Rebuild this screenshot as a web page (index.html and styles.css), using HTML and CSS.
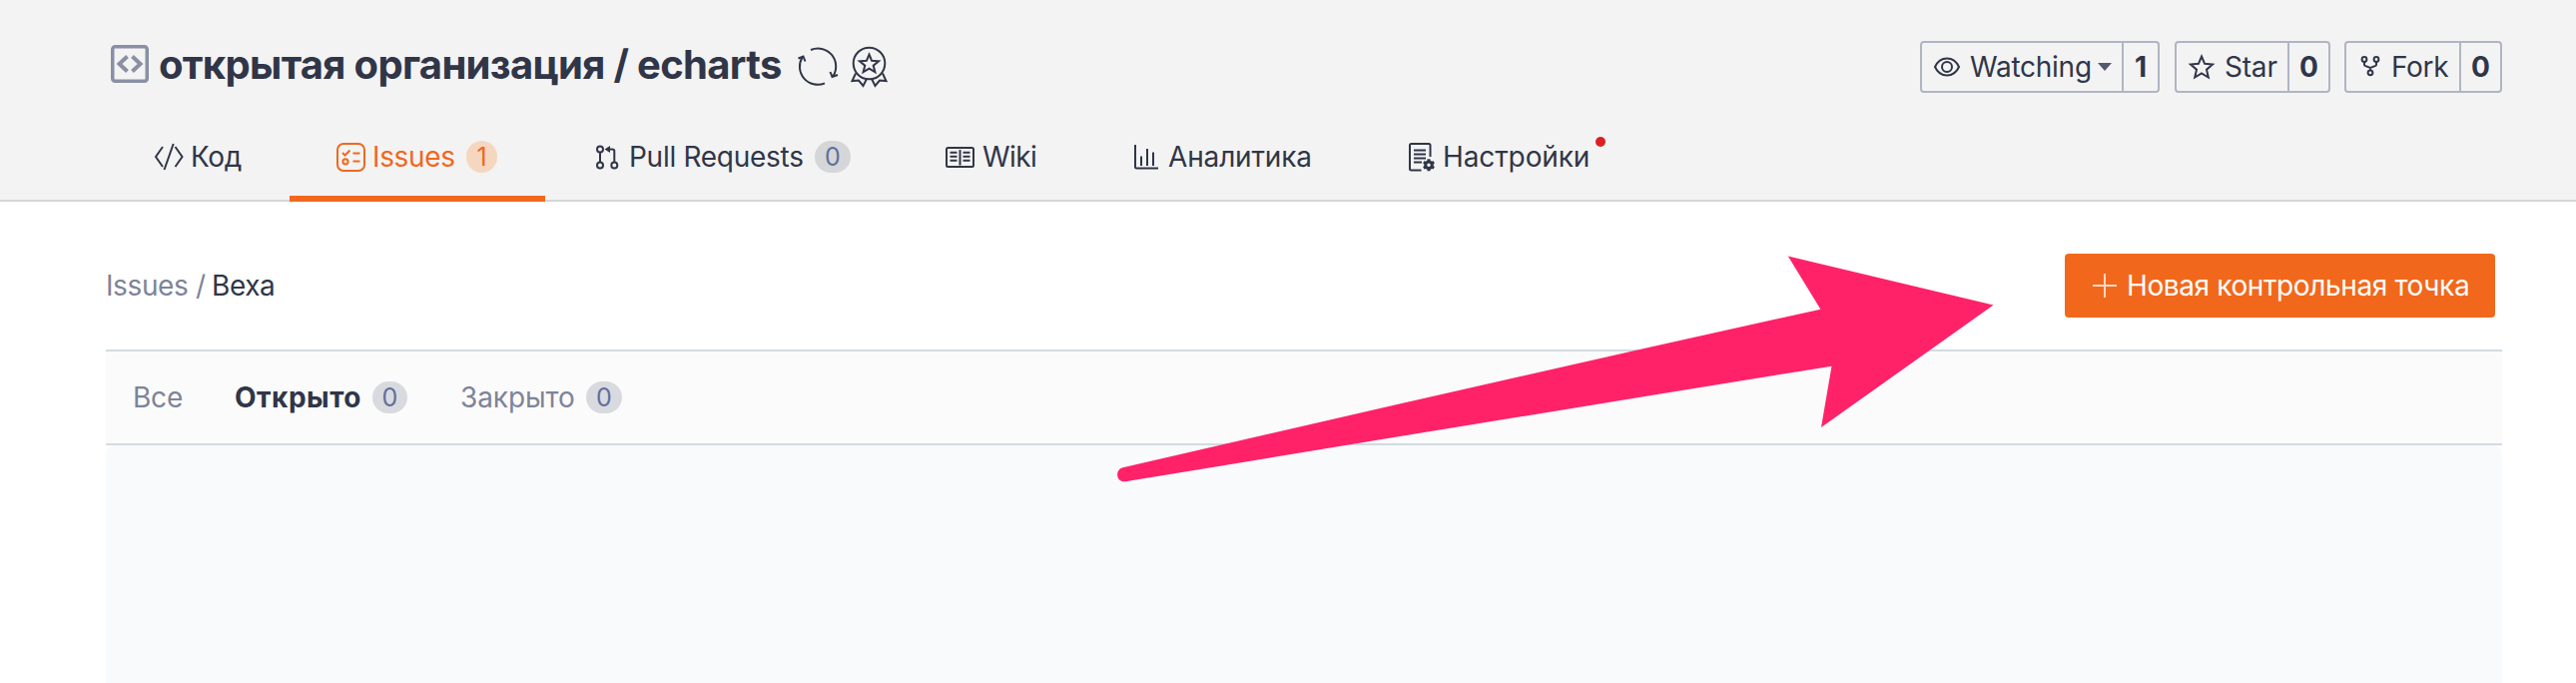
FILE: index.html
```html
<!DOCTYPE html>
<html lang="ru">
<head>
<meta charset="utf-8">
<title>открытая организация / echarts</title>
<link rel="stylesheet" href="styles.css">
</head>
<body>
<header class="header">
  <div class="title-row">
    <svg class="repo-icon" viewBox="0 0 38 38"><rect x="1.75" y="1.75" width="34.5" height="34.5" rx="2.5"/><path d="M16.500 11.500 8.500 19l8 7.500M21.500 11.500l8 7.500-8 7.500"/></svg>
    <h1 class="title"><span class="t">открытая организация / echarts</span></h1>
    <svg class="sync-icon line" viewBox="0 0 40 40"><path d="M13 3A18 18 0 0 1 35.500 29M27 36.300A18 18 0 0 1 4.500 10.500M.5 11.500l5-2 2 5M32.500 25l2 5 5.500-2"/></svg>
    <svg class="medal-icon line" viewBox="0 0 37 40"><circle cx="18.500" cy="16.500" r="15.800"/><path d="m18.500 7.500 2.600 6.300 6.900.5-5.300 4.300 1.700 6.600-5.900-3.600-5.900 3.600 1.700-6.600-5.300-4.300 6.900-.5z"/><path d="M5 26.500 1.500 34l6.500-.5 4.500 5.500 3.500-7M32 26.500l3.500 7.500-6.500-.5-4.500 5.500-3.500-7"/></svg>
    <div class="actions">
      <div class="action watch">
        <span class="action-main"><svg class="eye line" viewBox="0 0 26 20"><path d="M1 10C3.500 4.500 7.500 1.500 13 1.500S22.500 4.500 25 10c-2.500 5.500-6.500 8.500-12 8.500S3.500 15.500 1 10z"/><circle cx="13" cy="10" r="5"/></svg><span class="t">Watching</span><i class="caret"></i></span>
        <b class="action-count">1</b>
      </div>
      <div class="action star">
        <span class="action-main"><svg class="star-icon line" viewBox="0 0 24 24"><path d="m12 1.500 3.100 7.300 7.900.7-6 5.200 1.800 7.800L12 18.400l-6.800 4.100L7 14.700 1 9.500l7.900-.7z"/></svg><span class="t">Star</span></span>
        <b class="action-count">0</b>
      </div>
      <div class="action fork">
        <span class="action-main"><svg class="fork-icon line" viewBox="0 0 20 20"><circle cx="4" cy="3.500" r="2.400"/><circle cx="16" cy="3.500" r="2.400"/><circle cx="10" cy="16.800" r="2.400"/><path d="M4 6v2.700q0 .8.800 1.200L10 12l5.200-2.100q.8-.4.800-1.200V6M10 12v2.400"/></svg><span class="t">Fork</span></span>
        <b class="action-count">0</b>
      </div>
    </div>
  </div>
  <nav class="tabs">
    <a class="tab tab-code"><svg class="line" viewBox="0 0 28 28"><path d="M8 4 1 14l7 10M20.500 4l7 10-7 10M18.700 1 9.500 27"/></svg><span class="t">Код</span></a>
    <a class="tab tab-issues active"><svg class="line" viewBox="0 0 29 29"><rect x="1" y="1" width="27" height="27" rx="6"/><path d="m6 10 2.500 2.500L13.500 7.500M16.500 10.500h7M16.500 18.500h7"/><circle cx="9" cy="18.800" r="2.600"/></svg><span class="t">Issues</span><span class="badge">1</span></a>
    <a class="tab tab-pulls"><svg class="line" viewBox="0 0 22 25"><circle cx="4" cy="4.500" r="3"/><circle cx="4" cy="20.500" r="3"/><circle cx="18.300" cy="20.500" r="3"/><path d="M4 7.500v10M12 4.500h4.500q1.800 0 1.800 1.800v11.200"/><path class="solid" d="M8.500 4.500 14 1v7z"/></svg><span class="t">Pull Requests</span><span class="badge">0</span></a>
    <a class="tab tab-wiki"><svg class="line" viewBox="0 0 29 21"><rect x="1" y="1" width="27" height="19" rx="1.500"/><path d="M14.500 3v15.500M4.500 5.800h7M4.500 9.800h7M4.500 13.800h7M17.500 5.800h7M17.500 9.800h7M17.500 13.800h7"/></svg><span class="t">Wiki</span></a>
    <a class="tab tab-stats"><svg class="line" viewBox="0 0 24 25"><path d="M1 0v22q0 1.500 1.500 1.500H24M7 11.500v9.500M13 4v17M19 7.500V21"/></svg><span class="t">Аналитика</span></a>
    <a class="tab tab-settings"><svg class="line" viewBox="0 0 27 29"><path d="M12.500 27.500H2.500Q1 27.500 1 26V2.500Q1 1 2.500 1H20q1.500 0 1.500 1.500V14M5 7.500h12M5 11.500h12M5 15.500h12M5 19.500h8"/><circle class="gear" cx="20" cy="22.300" r="3.300"/><path class="teeth" d="M20 16.300v2.500M20 25.800v2.500M14.800 19.300l2.200 1.200M23 24.100l2.200 1.200M14.800 25.300l2.200-1.200M23 20.500l2.200-1.200"/></svg><span class="t">Настройки</span><i class="dot"></i></a>
  </nav>
</header>
<main class="content">
  <div class="page-bar">
    <div class="crumbs"><span class="t">Issues</span><span class="slash">/</span><span class="t current">Веха</span></div>
    <button class="create"><svg viewBox="0 0 24 24"><path d="M12 0v24M0 12h24"/></svg><span class="t">Новая контрольная точка</span></button>
  </div>
  <div class="filters">
    <a class="filter all"><span class="t">Все</span></a>
    <a class="filter open"><span class="t">Открыто</span><span class="badge">0</span></a>
    <a class="filter closed"><span class="t">Закрыто</span><span class="badge">0</span></a>
  </div>
  <section class="list"></section>
</main>
<svg class="pointer" viewBox="1110 250 900 240"><path d="M1790.800 256.500 1996.500 305.500 1824 428l10.500-61.300Q1480 424 1127 482.300C1117 483 1117 470 1124.500 468.300Q1474 387 1823.400 309.700z"/></svg>
</body>
</html>
```
FILE: styles.css
```css
* { box-sizing: border-box; }
body { margin: 0; width: 2580px; height: 684px; overflow: hidden; background: #fff; color: #303648; font: 28px/34px Inter, "Open Sans", sans-serif; }
svg { display: block; flex: none; overflow: visible; fill: none; }
.line { stroke: currentColor; stroke-width: 2; }
.solid { fill: currentColor; stroke: none; }
.t { display: block; white-space: nowrap; flex: none; }

.header { height: 202px; background: #f3f3f3; border-bottom: 2px solid #d4d5d6; }
.title-row { height: 130px; padding: 0 74px 0 111px; display: flex; align-items: flex-start; }
.repo-icon { width: 38px; height: 38px; margin-top: 45px; stroke: #8a90a3; stroke-width: 3.500px; }
.repo-icon path { stroke-width: 4px; }
.title { margin: 41px 0 0 10px; width: 628px; font-size: 40px; line-height: 48px; font-weight: 700; letter-spacing: -0.68px; }
.sync-icon { width: 40px; height: 40px; margin: 47px 0 0 12px; }
.medal-icon { width: 37px; height: 40px; margin: 47px 0 0 13px; }
.actions { margin: 41px 0 0 auto; display: flex; gap: 14px; }
.action { height: 52px; display: flex; border: 2px solid #b0b5c3; border-radius: 4px; }
.action-main { display: flex; align-items: center; flex: 1; }
.action-count { width: 41px; border-left: 2px solid #b0b5c3; text-align: center; line-height: 48px; font-weight: 700; }
.watch { width: 240px; margin-right: 1px; }
.watch .action-count { width: 36px; }
.star { width: 156px; }
.fork { width: 158px; }
.eye { width: 26px; height: 20px; margin: 0 10px 0 12px; }
.star-icon { width: 24px; height: 24px; margin: 0 11px 0 13px; }
.fork-icon { width: 20px; height: 20px; margin: -2px 11px 0 14px; }
.watch .t { width: 124px; letter-spacing: -0.25px; }
.fork .t { letter-spacing: -0.3px; }
.star .t { letter-spacing: -0.2px; }
.caret { margin-left: 4px; border: 7px solid transparent; border-top: 8px solid #535a6c; border-bottom: 0; }

.tabs { height: 72px; display: flex; padding-left: 112px; }
.tab { position: relative; height: 72px; flex: none; display: flex; align-items: center; padding: 0 0 18px 43px; }
.badge { display: block; height: 32px; border-radius: 16px; background: #d4d6d8; color: #60709b; font-size: 25px; line-height: 32px; text-align: center; flex: none; }
.tab-code { width: 178px; letter-spacing: -0.4px; }
.tab-code svg { width: 28px; height: 28px; margin-right: 8px; }
.tab-issues { width: 256px; padding-left: 47px; border-bottom: 6px solid #f1681c; padding-bottom: 12px; color: #f1681c; }
.tab-issues svg { width: 29px; height: 29px; margin-right: 7px; }
.tab-issues .t { width: 94px; letter-spacing: -0.35px; }
.tab-issues .badge { width: 31px; background: #f5d7c0; color: #f1681c; }
.tab-pulls { width: 354px; padding-left: 51px; }
.tab-pulls svg { width: 22px; height: 25px; margin-right: 11px; }
.tab-pulls .t { width: 186px; letter-spacing: -0.28px; }
.tab-pulls .badge { width: 36px; }
.tab-wiki { width: 185px; padding-left: 47px; }
.tab-wiki svg { width: 29px; height: 21px; margin-right: 8px; }
.tab-wiki .t { letter-spacing: -0.6px; }
.tab-stats { width: 275px; padding-left: 51px; }
.tab-stats svg { width: 24px; height: 25px; margin-right: 10px; }
.tab-stats .t { letter-spacing: -0.15px; }
.tab-settings { padding-left: 51px; }
.tab-settings svg { width: 27px; height: 29px; margin-right: 7px; }
.tab-settings .t { letter-spacing: -0.1px; }
.teeth { stroke-width: 3px; }
.gear { stroke-width: 3px; }
.dot { position: absolute; left: 238px; top: 7px; width: 10px; height: 10px; border-radius: 50%; background: #db1f23; }

.content { padding: 0 74px 0 106px; }
.page-bar { height: 148px; display: flex; justify-content: space-between; align-items: flex-start; padding: 52px 7px 0 0; }
.crumbs { display: flex; margin-top: 15px; color: #7d8499; }
.crumbs .t { width: 90px; letter-spacing: -0.4px; }
.crumbs .slash { width: 16px; }
.crumbs .current { color: #303648; }
.create { width: 431px; height: 64px; padding: 0 0 0 28px; border: 0; border-radius: 4px; background: #f1681c; color: #fff; font: inherit; letter-spacing: -0.38px; display: flex; align-items: center; }
.create svg { width: 24px; height: 24px; margin-right: 10px; stroke: #fbd8c3; stroke-width: 2px; }
.filters { height: 96px; border: solid #d2dbe3; border-width: 2px 0; background: #fbfbfb; display: flex; align-items: center; padding-left: 27px; color: #7d8499; }
.filter { display: flex; align-items: center; }
.filter .badge { background: #d9dadf; letter-spacing: 0; }
.all { width: 102px; letter-spacing: -0.2px; }
.open { width: 226px; color: #303648; font-weight: 700; }
.open .t { width: 138px; letter-spacing: 0.5px; }
.open .badge { width: 35px; font-weight: 400; }
.closed .t { width: 126px; letter-spacing: -0.1px; }
.closed .badge { width: 36px; }
.list { height: 238px; background: #f9fafc; border-radius: 8px 8px 0 0; }

.pointer { position: absolute; left: 1110px; top: 250px; width: 900px; height: 240px; fill: #ff2268; }
```
